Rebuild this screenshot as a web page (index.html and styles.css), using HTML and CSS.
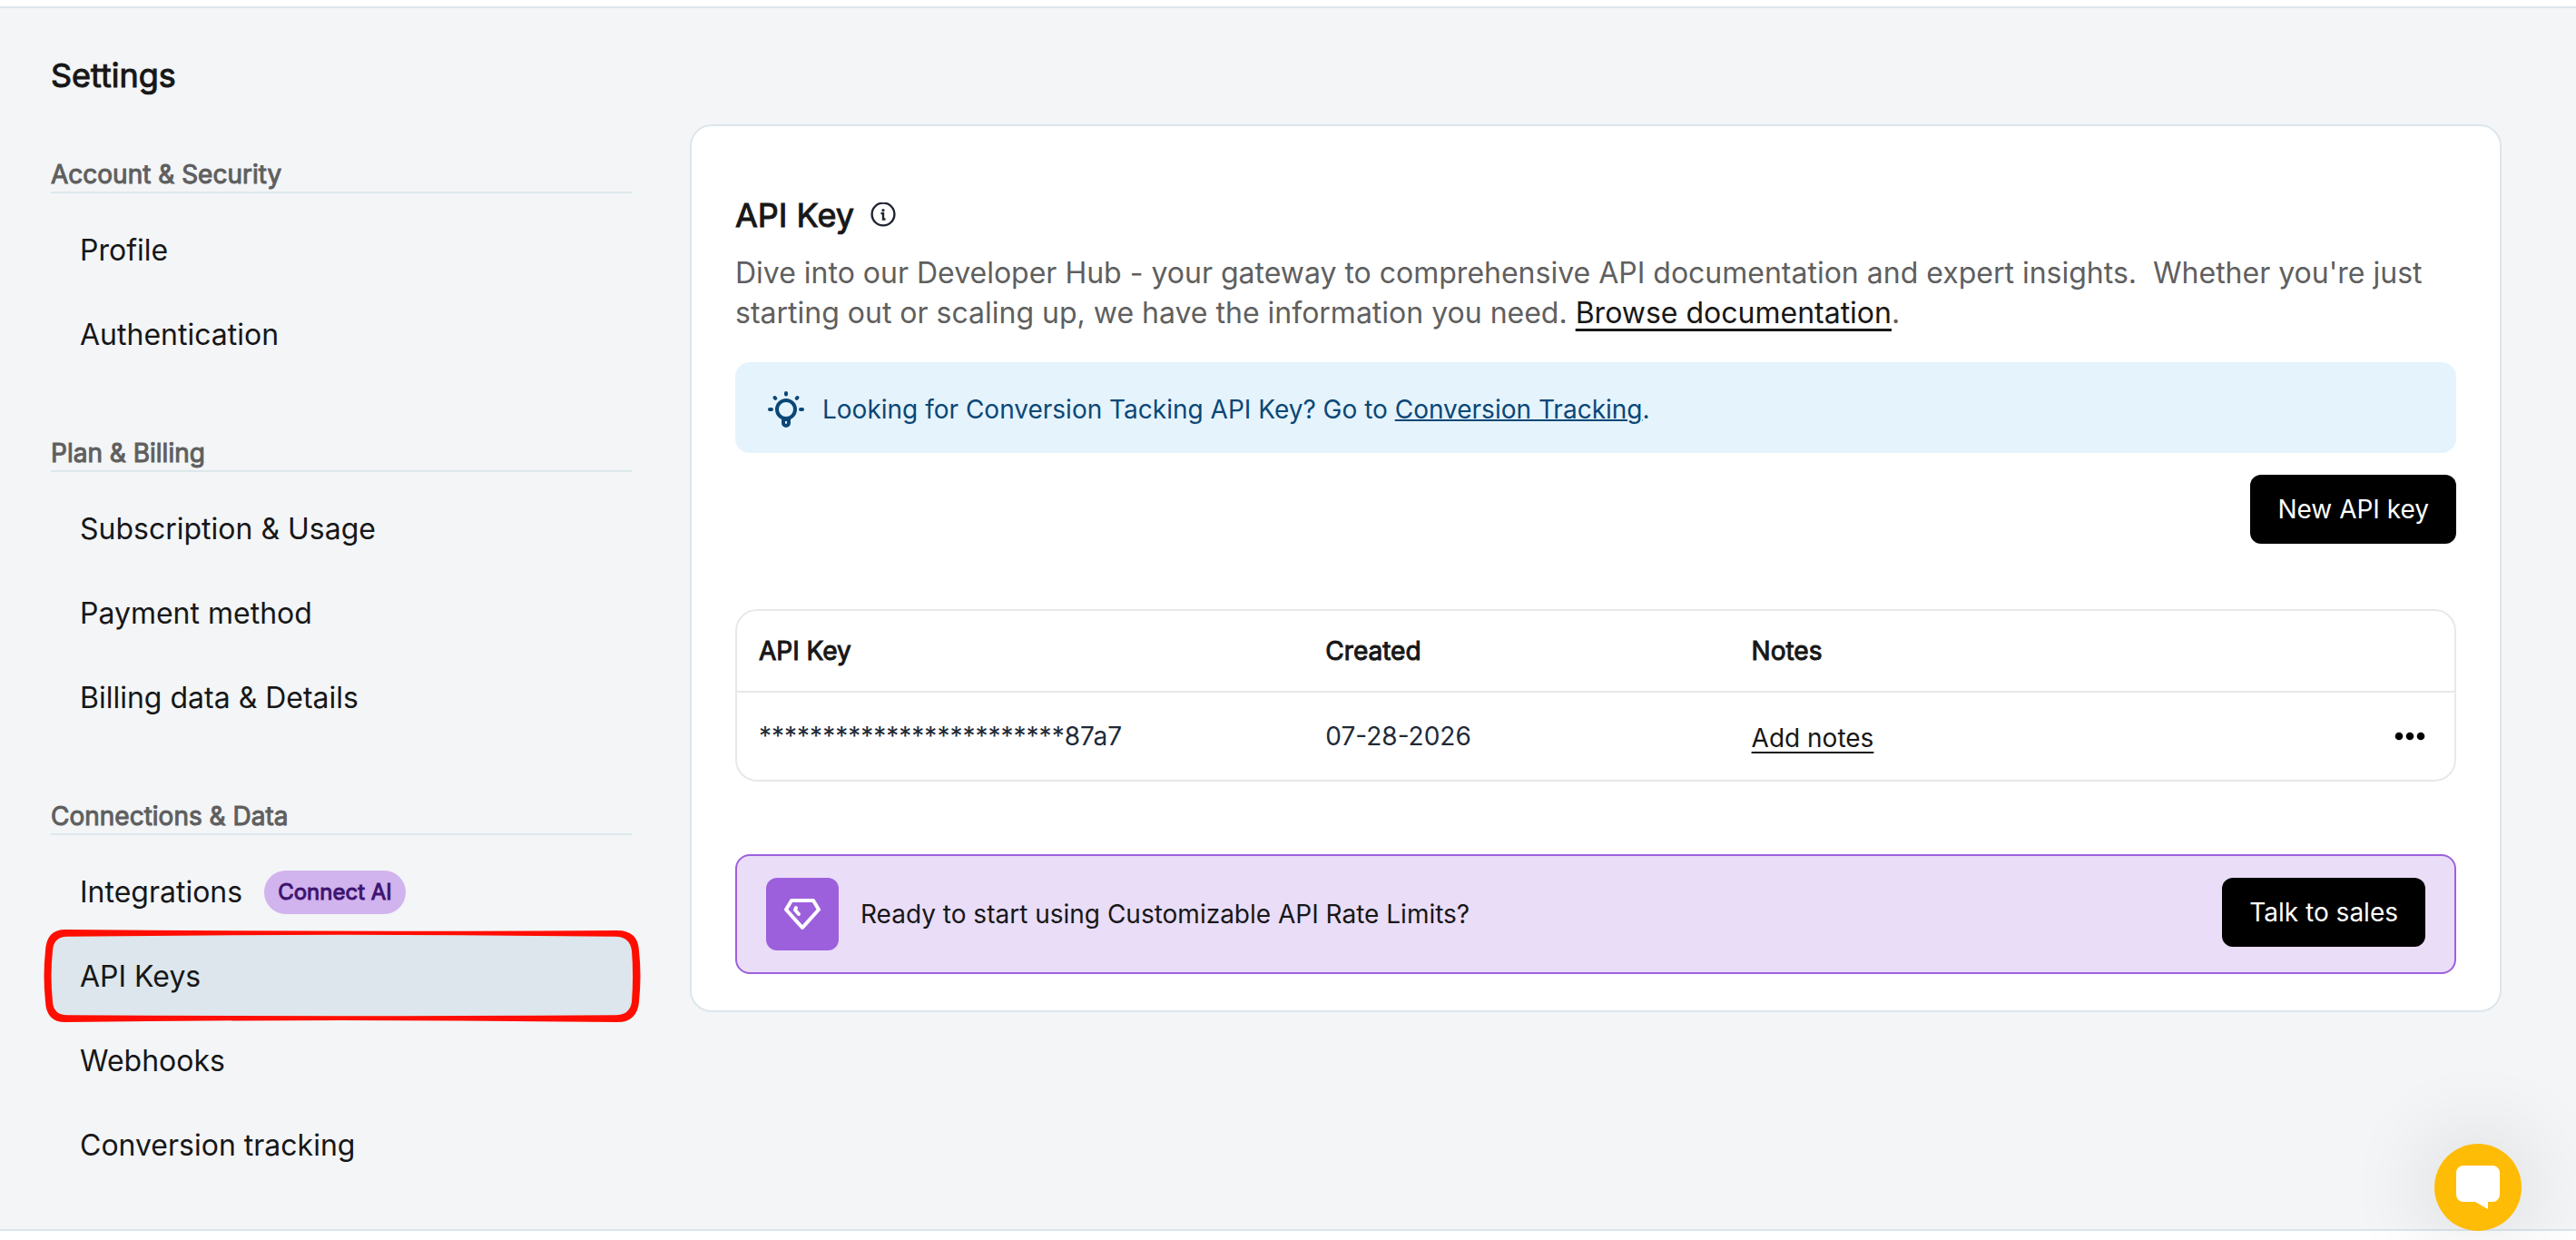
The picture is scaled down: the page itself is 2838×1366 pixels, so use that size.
FILE: index.html
```html
<!DOCTYPE html>
<html lang="en">
<head>
<meta charset="utf-8">
<meta name="viewport" content="width=device-width, initial-scale=1">
<title>Settings – API Keys</title>
<link rel="stylesheet" href="styles.css">
</head>
<body>
<div class="page">
  <aside class="sidebar">
    <h1 class="sidebar-title">Settings</h1>
    <nav class="nav" aria-label="Settings">
      <section class="nav-group">
        <h2 class="nav-heading">Account &amp; Security</h2>
        <a class="nav-item" href="#profile">Profile</a>
        <a class="nav-item" href="#authentication">Authentication</a>
      </section>
      <section class="nav-group">
        <h2 class="nav-heading">Plan &amp; Billing</h2>
        <a class="nav-item" href="#subscription">Subscription &amp; Usage</a>
        <a class="nav-item" href="#payment">Payment method</a>
        <a class="nav-item" href="#billing">Billing data &amp; Details</a>
      </section>
      <section class="nav-group">
        <h2 class="nav-heading">Connections &amp; Data</h2>
        <a class="nav-item" href="#integrations">Integrations <span class="badge">Connect AI</span></a>
        <a class="nav-item nav-item-active" href="#api-keys" aria-current="page">API Keys
          <svg class="marker" viewBox="0 0 658 106" preserveAspectRatio="none" aria-hidden="true">
            <path fill="#ff0d00" fill-rule="evenodd" d="M24 1 Q330 4 632 2 Q655 2 656 25 Q659 53 656 82 Q654 105 632 105 Q330 101 24 105 Q3 105 2 82 Q-1 53 2 25 Q3 1 24 1Z M26 9 Q330 5 630 9 Q646 9 648 25 Q650 53 648 82 Q646 97 630 97 Q330 99 26 97 Q11 97 10 82 Q7 53 10 25 Q11 9 26 9Z"/>
          </svg>
        </a>
        <a class="nav-item" href="#webhooks">Webhooks</a>
        <a class="nav-item" href="#conversion-tracking">Conversion tracking</a>
      </section>
    </nav>
  </aside>

  <main class="card">
    <header class="card-header">
      <h2 class="card-title">API Key</h2>
      <svg class="info-icon" viewBox="0 0 28 28" fill="none" stroke="#1f2433" stroke-width="2.400" aria-hidden="true">
        <circle cx="14" cy="13" r="12.400"/>
        <path d="M11.500 12h2.500v6.500h2.500"/>
        <circle cx="14" cy="8.500" r="1.600" fill="#1f2433" stroke="none"/>
      </svg>
    </header>
    <p class="lead">Dive into our Developer Hub - your gateway to comprehensive API documentation and expert insights.&nbsp; Whether you're just starting out or scaling up, we have the information you need. <a class="doc-link" href="#docs">Browse documentation</a>.</p>

    <div class="notice">
      <svg class="notice-icon" viewBox="0 0 40 40" fill="none" stroke="#0a4776" stroke-width="4" stroke-linecap="round" aria-hidden="true">
        <path d="M20 2v1.500M7.500 7l.8.8M32.500 7l-.8.8M2 20h2M36 20h2"/>
        <circle cx="20" cy="20" r="10"/>
        <path d="M17 31v4a3 3 0 0 0 6 0v-4z" stroke-linejoin="round"/>
      </svg>
      <p class="notice-text">Looking for Conversion Tacking API Key? Go to <a href="#conversion-tracking">Conversion Tracking</a>.</p>
    </div>

    <div class="actions"><button class="button" type="button">New API key</button></div>

    <div class="table-frame">
      <table class="keys">
        <colgroup><col class="col-key"><col class="col-created"><col class="col-notes"><col></colgroup>
        <thead>
          <tr><th scope="col">API Key</th><th scope="col">Created</th><th scope="col">Notes</th><th></th></tr>
        </thead>
        <tbody>
          <tr>
            <td>************************87a7</td>
            <td>07-28-2026</td>
            <td class="cell-notes"><a class="notes-link" href="#notes">Add notes</a></td>
            <td class="cell-menu">
              <button class="menu-button" type="button" aria-label="More actions">
                <svg class="dots" viewBox="0 0 34 10" aria-hidden="true"><circle cx="5" cy="5" r="4.300"/><circle cx="17" cy="5" r="4.300"/><circle cx="29" cy="5" r="4.300"/></svg>
              </button>
            </td>
          </tr>
        </tbody>
      </table>
    </div>

    <section class="promo">
      <span class="promo-icon">
        <svg class="gem" viewBox="0 0 40 36" fill="none" stroke="#fff" stroke-width="4" stroke-linejoin="round" stroke-linecap="round" aria-hidden="true">
          <path d="M8 3h24l6 10L20 33 2 13z"/>
          <path d="M13 11l-1 2.500 4 4.500" stroke-width="4"/>
        </svg>
      </span>
      <p class="promo-text">Ready to start using Customizable API Rate Limits?</p>
      <button class="button" type="button">Talk to sales</button>
    </section>
  </main>
</div>
<button class="chat" type="button" aria-label="Open chat">
  <svg class="chat-icon" viewBox="0 0 48 48" fill="#fff" aria-hidden="true"><path d="M8 0h32a8 8 0 0 1 8 8v24a8 8 0 0 1-8 8h-5v8L21 40H8a8 8 0 0 1-8-8V8a8 8 0 0 1 8-8z"/></svg>
</button>
</body>
</html>
```
FILE: styles.css
```css
* { box-sizing: border-box; }
body {
  margin: 0;
  padding: 7px 0 10px;
  background: #fff;
  color: #171717;
  font-family: Inter, "Liberation Sans", sans-serif;
  font-size: 28px;
  line-height: 40px;
}
h1, h2, p { margin: 0; }
a { color: inherit; }
button { font: inherit; cursor: pointer; border: 0; }

.page {
  display: grid;
  grid-template-columns: 640px minmax(0, 1fr);
  column-gap: 64px;
  align-items: start;
  padding: 50px 82px 46px 56px;
  border-top: 2px solid #dce6ec;
  border-bottom: 2px solid #dce6ec;
  background: #f3f5f7;
}

/* Headings are the regular cut, thickened by an outline */
.sidebar-title, .card-title, .nav-heading, .badge, .keys th {
  font-weight: 400;
  -webkit-text-stroke: 1px currentColor;
}
.sidebar-title, .card-title { font-size: 36px; line-height: 48px; }
.nav { display: flex; flex-direction: column; gap: 61px; margin-top: 62px; }
.nav-group { display: flex; flex-direction: column; }
.nav-heading {
  height: 44px;
  margin-bottom: 16px;
  border-bottom: 2px solid #dce8ec;
  color: #5f5f5f;
  font-size: 28px;
  line-height: 46px;
}
.nav-item {
  position: relative;
  display: flex;
  align-items: center;
  gap: 24px;
  height: 93px;
  padding-left: 32px;
  font-size: 32px;
  text-decoration: none;
}
.nav-item-active { background: #dce6ec; }
.badge {
  padding: 0 15px;
  border-radius: 24px;
  background: #d1b3ee;
  color: #3d1470;
  font-size: 24px;
  line-height: 48px;
}
.marker { position: absolute; top: -6px; left: -8px; width: calc(100% + 18px); height: 104px; }

.card {
  margin-top: 78px;
  padding: 74px 48px 40px;
  border: 2px solid #dce6ec;
  border-radius: 24px;
  background: #fff;
}
.card-header { display: flex; align-items: center; gap: 18px; }
.info-icon { width: 28px; height: 28px; }
.lead { margin-top: 18px; color: #5f5f5f; font-size: 32px; line-height: 44px; }
.doc-link { color: #171717; text-decoration-thickness: 3px; text-underline-offset: 6px; text-decoration-skip-ink: none; }
.notice {
  display: flex;
  align-items: center;
  gap: 20px;
  min-height: 100px;
  margin-top: 32px;
  padding: 20px 36px 16px;
  border-radius: 16px;
  background: #e5f3fd;
  color: #0a4776;
}
.notice-icon { width: 40px; height: 40px; }
.notice a { text-decoration-thickness: 2px; }
.actions { display: flex; justify-content: flex-end; margin-top: 24px; }
.button { height: 76px; padding: 0 30px; border-radius: 12px; background: #000; color: #fff; }

.table-frame { margin-top: 72px; border: 2px solid #e8e8e8; border-radius: 24px; }
.keys { width: 100%; table-layout: fixed; border-collapse: collapse; text-align: left; }
.col-key { width: 33%; }
.col-created { width: 24.8%; }
.col-notes { width: 25%; }
.keys th, .keys td { padding: 0 24px; }
.keys th { height: 89px; border-bottom: 2px solid #e8e8e8; }
.keys td { height: 97px; color: #222a37; }
.keys .cell-notes { padding-top: 4px; }
.notes-link { color: #171717; text-decoration-thickness: 2px; text-underline-offset: 5px; }
.keys .cell-menu { padding-right: 32px; }
.menu-button { display: block; margin-left: auto; padding: 0; background: none; }
.dots { display: block; width: 34px; height: 10px; }

.promo {
  display: flex;
  gap: 24px;
  margin-top: 80px;
  padding: 24px 32px;
  border: 2px solid #9d60dc;
  border-radius: 16px;
  background: #eaddf8;
}
.promo-icon { display: grid; place-items: center; width: 80px; height: 80px; border-radius: 12px; background: #9d60dc; }
.gem { width: 40px; height: 36px; }
.promo-text { flex: 1; align-self: center; }

.chat {
  position: fixed;
  right: 60px;
  bottom: 10px;
  display: grid;
  place-items: center;
  width: 96px;
  height: 96px;
  padding: 0;
  border-radius: 50%;
  background: #ffbc06;
  box-shadow: 0 0 100px rgba(0, 0, 0, .16);
}
.chat-icon { width: 48px; height: 48px; }
```
